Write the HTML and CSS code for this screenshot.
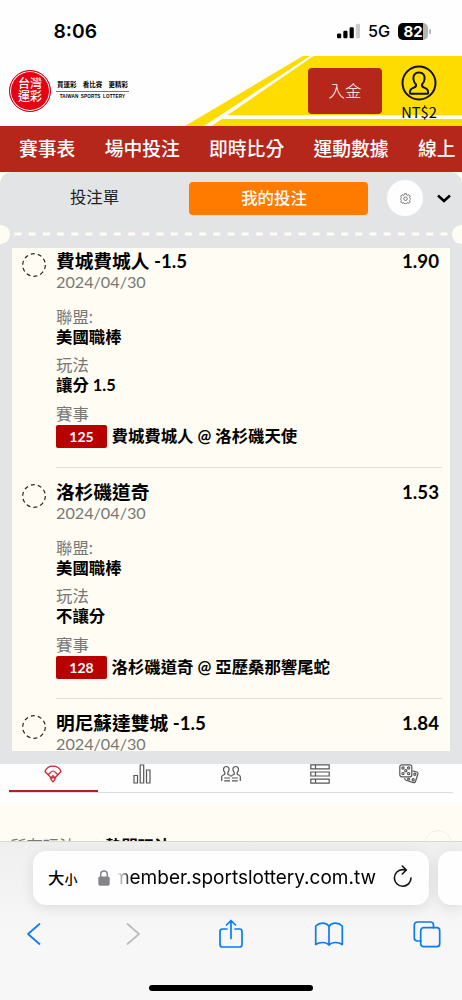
FILE: index.html
```html
<!DOCTYPE html>
<html lang="zh-Hant">
<head>
  <meta charset="UTF-8" />
  <meta name="viewport" content="width=device-width, initial-scale=1.0" />
  <title>台灣運彩</title>
  <link rel="stylesheet" href="styles.css">
</head>
<body>

  <!-- Phone status bar -->
  <div class="status-bar">
    <span class="clock">8:06</span>
    <div class="status-icons">
      <svg width="23" height="16" viewBox="0 0 23 16">
        <rect x="0" y="10.5" width="4.2" height="4.8" rx="1.2"/>
        <rect x="6.3" y="7.7" width="4.2" height="7.6" rx="1.2"/>
        <rect x="12.6" y="4.2" width="4.2" height="11.1" rx="1.2"/>
        <rect x="18.8" y="0.8" width="4.2" height="14.5" rx="1.2" fill="#ccc"/>
      </svg>
      <span class="network">5G</span>
      <div class="battery">82</div>
    </div>
  </div>

  <header class="header">
    <svg class="header-bg" width="462" height="70" viewBox="0 0 462 70">
      <path d="M303 0H462V70H185Z" fill="#ffdc00"/>
      <path d="M310 0H313.500L211.500 70H204ZM224 59.300H462V63H218Z" fill="#fff"/>
    </svg>
    <div class="logo">
      <div class="logo-mark"><span>台灣</span><span>運彩</span></div>
      <div class="logo-text">
        <div class="slogan"><span>買運彩</span><span>看比賽</span><span>更精彩</span></div>
        <div class="logo-en">TAIWAN SPORTS LOTTERY</div>
      </div>
    </div>
    <button class="deposit-btn">入金</button>
    <div class="account">
      <svg width="36" height="36" viewBox="0 0 36 36" fill="none" stroke="#111" stroke-width="2">
        <circle cx="18" cy="18" r="16.500"/>
        <path d="M18 7.500c-4 0-6 2.700-5.600 6.500.3 2.500 1.300 4.300 2.600 5.400.4 1.900-.3 2.600-2.200 3.200-2.700.8-4.100 2.400-3.900 5.200.1.700.5 1 1.200 1h15.800c.7 0 1.100-.3 1.200-1 .2-2.800-1.200-4.400-3.900-5.200-1.900-.6-2.600-1.300-2.200-3.200 1.300-1.100 2.300-2.900 2.600-5.400.4-3.800-1.600-6.500-5.600-6.500z"/>
      </svg>
      <span>NT$2</span>
    </div>
  </header>

  <nav class="main-nav">
    <a>賽事表</a>
    <a>場中投注</a>
    <a>即時比分</a>
    <a>運動數據</a>
    <a>線上</a>
  </nav>

  <!-- Bet slip -->
  <div class="slip-wrap">
    <section class="slip">
      <div class="slip-tabs">
        <span class="slip-tab">投注單</span>
        <span class="slip-tab active">我的投注</span>
        <span class="settings">
          <svg width="11" height="11" viewBox="0 0 22 22" fill="none" stroke="#555" stroke-width="1.600">
            <path d="M9 1.500h4l.6 2.600 1.900.8 2.300-1.500 2.800 2.800-1.500 2.300.8 1.900.6.600v2l-.6.600-.8 1.900 1.500 2.300-2.800 2.800-2.300-1.500-1.900.8-.6 1.600H9l-.6-1.600-1.900-.8-2.300 1.500-2.800-2.800 1.500-2.300-.8-1.900-.6-.600v-2l.6-.600.8-1.900-1.500-2.300 2.800-2.800 2.300 1.500 1.900-.8z"/>
            <circle cx="11" cy="11.500" r="3.500"/>
          </svg>
        </span>
        <svg class="chevron" width="14" height="9" viewBox="0 0 14 9"><path d="M1 1.500L7 7L13 1.500" fill="none" stroke="#000" stroke-width="2.400"/></svg>
      </div>
      <div class="perforation">
        <span class="notch"></span>
        <svg width="434" height="4" viewBox="0 0 434 4"><path d="M0.500 2H434" stroke="#fffdf3" stroke-width="3" stroke-dasharray="7 7.200"/></svg>
        <span class="notch"></span>
      </div>

      <div class="bet-list">
        <article class="bet">
          <svg class="bet-status" width="26" height="26" viewBox="0 0 26 26"><circle cx="13" cy="13" r="11.300"/></svg>
          <div class="bet-body">
            <div class="bet-title"><h2>費城費城人 -1.5</h2><span>1.90</span></div>
            <div class="date">2024/04/30</div>
            <dl>
              <dt>聯盟:</dt><dd>美國職棒</dd>
              <dt>玩法</dt><dd>讓分 1.5</dd>
              <dt>賽事</dt><dd class="match"><span class="badge">125</span>費城費城人 @ 洛杉磯天使</dd>
            </dl>
          </div>
        </article>

        <article class="bet">
          <svg class="bet-status" width="26" height="26" viewBox="0 0 26 26"><circle cx="13" cy="13" r="11.300"/></svg>
          <div class="bet-body">
            <div class="bet-title"><h2>洛杉磯道奇</h2><span>1.53</span></div>
            <div class="date">2024/04/30</div>
            <dl>
              <dt>聯盟:</dt><dd>美國職棒</dd>
              <dt>玩法</dt><dd>不讓分</dd>
              <dt>賽事</dt><dd class="match"><span class="badge">128</span>洛杉磯道奇 @ 亞歷桑那響尾蛇</dd>
            </dl>
          </div>
        </article>

        <article class="bet">
          <svg class="bet-status" width="26" height="26" viewBox="0 0 26 26"><circle cx="13" cy="13" r="11.300"/></svg>
          <div class="bet-body">
            <div class="bet-title"><h2>明尼蘇達雙城 -1.5</h2><span>1.84</span></div>
            <div class="date">2024/04/30</div>
          </div>
        </article>
      </div>
    </section>
  </div>

  <!-- Event page tabs -->
  <div class="icon-tabs">
    <div class="icon-tab active">
      <svg width="18" height="18" viewBox="0 0 18 18">
        <path d="M1 6.500C3.500 -0.600 14.500 -0.600 17 6.500L11 12.800V14.500L9 16.800L7 14.500V12.800Z"/>
        <path d="M4.500 10Q4.700 8 6.500 7.800Q7 6 9 6T11.500 7.800Q13.300 8 13.500 10M6.800 12.800L9 10.500L11.200 12.800Z"/>
      </svg>
    </div>
    <div class="icon-tab">
      <svg width="18" height="20" viewBox="0 0 18 20"><path d="M1 11.500h3.500v7.500H1zM7.200 1h3.500v18H7.200zM13.500 6H17V19h-3.500z"/></svg>
    </div>
    <div class="icon-tab">
      <svg width="20" height="18" viewBox="0 0 20 18">
        <path d="M.7 17V12.800Q.7 11.500 2.300 11L3.800 10.300V8.500Q2.300 6.800 2.500 4.800Q3 2.500 5.300 2.500T8.100 4.800Q8.300 6.800 6.800 8.500V10.300L8.300 11Q9.500 11.400 9.500 12.500M10.500 12.500Q10.500 11.400 11.700 11L13.200 10.300V8.500Q11.700 6.800 11.900 4.800Q12.400 2.500 14.700 2.500T17.500 4.800Q17.700 6.800 16.200 8.500V10.300L17.700 11Q19.300 11.500 19.300 12.800V17M3.200 14H9M3.200 16.800H9M11 14H16.800M11 16.800H16.800"/>
      </svg>
    </div>
    <div class="icon-tab">
      <svg width="20" height="20" viewBox="0 0 20 20"><path d="M.8 .8h18.400v4H.8zM.8 8h18.400v4H.8zM.8 15.200h18.400v4H.8zM5.500 .8v4M5.500 8v4M5.500 15.200v4"/></svg>
    </div>
    <div class="icon-tab">
      <svg width="20" height="20" viewBox="0 0 20 20">
        <rect x=".8" y=".8" width="12" height="12" rx="2"/>
        <path d="M13.500 6.800L17.800 8Q19.300 8.500 18.900 10L16.500 17.500Q16 19 14.500 18.600L7 16.200Q5.500 15.500 5.800 14"/>
        <circle cx="4" cy="4" r="1.100"/><circle cx="9.600" cy="4" r="1.100"/><circle cx="6.800" cy="6.800" r="1.100"/>
        <circle cx="4" cy="9.600" r="1.100"/><circle cx="9.600" cy="9.600" r="1.100"/>
        <circle cx="15.800" cy="10.300" r="1.100"/><circle cx="14.200" cy="15.800" r="1.100"/><circle cx="9.600" cy="15" r="1"/>
      </svg>
    </div>
  </div>
  <div class="page-below">
    <span>所有玩法</span>
    <strong>熱門玩法</strong>
    <i></i>
  </div>

  <!-- Browser bar -->
  <footer class="browser">
    <div class="address-row">
      <div class="address">
        <span class="text-size">大<small>小</small></span>
        <svg class="lock" width="12" height="16" viewBox="0 0 12 16"><rect x=".3" y="6.500" width="11.400" height="9.200" rx="1.800" fill="#858589"/><path d="M2.700 7V4.300Q2.700 1 6 1T9.300 4.300V7" fill="none" stroke="#858589" stroke-width="1.500"/></svg>
        <div class="url"><span>member.sportslottery.com.tw</span></div>
        <svg class="reload" width="20" height="23" viewBox="0 0 20 23" fill="none" stroke="#111" stroke-width="1.600" stroke-linecap="round" stroke-linejoin="round"><path d="M12.500 5Q11 4.600 9.700 4.600A8.300 8.300 0 1 0 18 13M9.300 1L13.300 5L9.300 9"/></svg>
      </div>
      <div class="next-page"></div>
    </div>
    <div class="toolbar">
      <svg width="30" height="30" viewBox="0 0 30 30"><path d="M20.500 5L9 15L20.500 25"/></svg>
      <svg class="disabled" width="30" height="30" viewBox="0 0 30 30"><path d="M10.500 5L22 15L10.500 25"/></svg>
      <svg width="30" height="30" viewBox="0 0 30 30"><path d="M11 10H6.500Q4 10 4 12.500V25.500Q4 28 6.500 28H23.500Q26 28 26 25.500V12.500Q26 10 23.500 10H19M15 19.500V1.500M10.500 6L15 1.500L19.500 6"/></svg>
      <svg width="30" height="30" viewBox="0 0 30 30"><path d="M15 7.500Q13 4.200 8.500 4.200Q4.500 4.200 1.700 7V25.500Q4.500 23.500 8.500 23.500Q13 23.500 15 26Q17 23.500 21.500 23.500Q25.500 23.500 28.300 25.500V7Q25.500 4.200 21.500 4.200Q17 4.200 15 7.500ZM15 7.500V26"/></svg>
      <svg width="30" height="30" viewBox="0 0 30 30"><rect x="8.700" y="8.700" width="19" height="19" rx="3"/><path d="M8.700 22H5.500Q2.300 22 2.300 19V6Q2.300 3 5.500 3H18.500Q21.500 3 21.500 6V8.700"/></svg>
    </div>
    <div class="home-indicator"></div>
  </footer>

</body>
</html>
```
FILE: styles.css
```css
* {
  box-sizing: border-box;
}

body {
  margin: 0;
  width: 462px;
  height: 1000px;
  overflow: hidden;
  background: #fefefe;
  color: #000;
  font-family: Lato, "Noto Sans CJK TC", sans-serif;
}

svg {
  display: block;
  flex-shrink: 0;
}

.status-bar {
  height: 55px;
  padding: 7px 34px 0 53.5px;
  display: flex;
  align-items: center;
  justify-content: space-between;
  font-family: Inter, sans-serif;
}

.clock {
  font-size: 19.3px;
  font-weight: 600;
}

.status-icons {
  display: flex;
  align-items: center;
}

.network {
  margin: 0 8px;
  font-size: 16.2px;
  font-weight: 500;
}

.battery {
  position: relative;
  width: 30px;
  height: 17px;
  border-radius: 5px;
  background: linear-gradient(to right, #000 82%, #b5b5b5 82%);
  color: #fff;
  font-size: 15px;
  font-weight: 700;
  line-height: 17px;
  text-align: center;
}

.battery::after {
  content: "";
  position: absolute;
  right: -2.5px;
  top: 6px;
  width: 1.5px;
  height: 5px;
  border-radius: 1px;
  background: #b5b5b5;
}

.header {
  position: relative;
  height: 70.5px;
  display: flex;
  padding-left: 9px;
}

.header-bg {
  position: absolute;
  top: 0.5px;
  left: 0;
  z-index: -1;
}

.logo {
  display: flex;
  width: 299px;
  padding-top: 14.5px;
}

.logo-mark {
  display: flex;
  flex-direction: column;
  align-items: center;
  justify-content: center;
  width: 42px;
  height: 42px;
  border: 1px solid #d8000f;
  border-radius: 50%;
  background: #e60012;
  box-shadow: inset 0 0 0 1px #fff;
  color: #fff;
  font-size: 12px;
  font-weight: 500;
  line-height: 12.5px;
}

.logo-text {
  width: 73px;
  margin: 10px 0 0 5px;
}

.slogan {
  display: flex;
  justify-content: space-between;
  padding: 0 1px 2px;
  border-bottom: 1px solid #777;
  font-size: 6.5px;
  font-weight: 700;
  line-height: 9px;
}

.logo-en {
  margin-top: 1px;
  font: bold 4.6px/8px "Liberation Sans", sans-serif;
  text-align: center;
  word-spacing: 1px;
  white-space: nowrap;
  letter-spacing: 0.15px;
}

.deposit-btn {
  width: 74px;
  height: 46px;
  margin-top: 12.5px;
  padding: 0;
  border: none;
  border-radius: 4px;
  background: #b5261b;
  color: #fff;
  font: 300 16.4px/46px Lato, "Noto Sans CJK TC", sans-serif;
}

.account {
  display: flex;
  flex-direction: column;
  align-items: center;
  width: 74px;
  padding-top: 9.5px;
  font-family: "Noto Sans CJK TC", sans-serif;
  font-size: 14.6px;
  line-height: 21px;
}

.main-nav {
  display: flex;
  gap: 29.3px;
  height: 46px;
  padding-left: 19px;
  overflow: hidden;
  background: #b5261b;
  color: #fff;
  font-size: 18.8px;
  font-weight: 500;
  line-height: 45px;
  white-space: nowrap;
}

.slip-wrap {
  background: #fffdf3;
}

.slip {
  height: 592.5px;
  border-radius: 12px 12px 0 0;
  background: #e3e4e6;
}

.slip-tabs {
  display: flex;
  align-items: center;
  height: 53px;
  font-size: 16.4px;
}

.slip-tab {
  width: 189px;
  color: #222;
  line-height: 33px;
  padding-bottom: 3px;
  text-align: center;
}

.slip-tab.active {
  width: 179px;
  height: 33px;
  padding: 0 9px 0 0;
  border-radius: 4px;
  background: #ff7b00;
  color: #fff;
  font-weight: 500;
  line-height: 32px;
}

.settings {
  display: flex;
  align-items: center;
  justify-content: center;
  width: 36px;
  height: 36px;
  margin-left: 19px;
  border-radius: 50%;
  background: #fefefe;
}

.chevron {
  margin-left: 14px;
}

.perforation {
  display: flex;
  align-items: center;
  justify-content: space-between;
  height: 19px;
  margin: 0 -9px 4px;
}

.notch {
  width: 19px;
  height: 19px;
  border-radius: 50%;
  background: #fffdf3;
}

.bet-list {
  height: 503px;
  margin: 0 12px;
  overflow: hidden;
  background: #fffdf3;
}

.bet {
  display: flex;
  height: 231px;
  padding-left: 9px;
}

.bet-status {
  margin-top: 4px;
}

.bet-status circle {
  fill: none;
  stroke: #222;
  stroke-width: 1.2;
  stroke-dasharray: 4 3.1;
}

.bet-body {
  width: 386px;
  height: 220px;
  margin-left: 9px;
  border-bottom: 1px solid #dedddb;
}

.bet-title {
  display: flex;
  justify-content: space-between;
  height: 26px;
  padding-right: 3px;
  font-size: 18.7px;
  font-weight: 700;
  line-height: 27px;
}

h2 {
  margin: 0;
  font: inherit;
}

.date {
  color: #777;
  font-size: 16.2px;
  line-height: 15px;
}

dl {
  margin: 18px 0 0;
  font-size: 16.4px;
  line-height: 20px;
}

dt {
  color: #777;
}

dd {
  margin: 0 0 8.5px;
  font-weight: 700;
}

.match {
  display: flex;
  align-items: center;
  gap: 4.5px;
  height: 23px;
  margin-top: 1px;
}

.badge {
  width: 51px;
  height: 23px;
  border-radius: 2px;
  background: #b80000;
  color: #fff;
  font-size: 14px;
  line-height: 23px;
  text-align: center;
}

.icon-tabs {
  display: flex;
  height: 29px;
  margin: 0 9px;
  border-bottom: 1px solid #ddd;
}

.icon-tab {
  display: flex;
  justify-content: center;
  flex: 1;
  height: 28px;
}

.icon-tab svg {
  fill: none;
  stroke: #555;
  stroke-width: 1.2;
}

.icon-tab.active {
  border-bottom: 2px solid #b91c1c;
}

.icon-tab.active svg {
  margin-top: 1px;
  stroke: #c8232a;
}

.page-below {
  display: flex;
  height: 38px;
  margin-top: 10px;
  padding: 35px 10px 0;
  overflow: hidden;
  background: #fffdf3;
  font-size: 16.4px;
  line-height: 16px;
}

.page-below span {
  width: 95px;
  color: #777;
}

.page-below i {
  width: 28px;
  height: 28px;
  margin: -8px 0 0 auto;
  border: 1px solid #f0eeea;
  border-radius: 50%;
}

.browser {
  height: 159px;
  border-top: 1px solid #d9d8d5;
  background: linear-gradient(#efefef, #f7f7f7 90px);
}

.address-row {
  display: flex;
  gap: 9px;
  padding: 9px 0 0 33px;
}

.address {
  display: flex;
  flex-shrink: 0;
  align-items: center;
  width: 396px;
  height: 54px;
  padding: 0 16px 0 15px;
  border-radius: 13px;
  background: #fefefe;
  box-shadow: 0 3px 14px rgba(0, 0, 0, 0.1);
}

.next-page {
  flex: 1;
  height: 54px;
  border-radius: 13px 0 0 13px;
  background: #fefefe;
  box-shadow: 0 3px 14px rgba(0, 0, 0, 0.1);
}

.text-size {
  width: 50px;
  margin-top: -2px;
  font-size: 16.4px;
  font-weight: 500;
}

.text-size small {
  font-size: 13px;
}

.url {
  display: flex;
  justify-content: flex-end;
  width: 259px;
  margin-left: 7px;
  overflow: hidden;
  font: 19px/26px Inter, sans-serif;
  -webkit-mask-image: linear-gradient(to right, transparent, #000 14px);
  mask-image: linear-gradient(to right, transparent, #000 14px);
}

.reload {
  margin: -3px 0 0 auto;
}

.toolbar {
  display: flex;
  justify-content: space-between;
  padding: 14px 20px 0 19px;
}

.toolbar svg {
  fill: none;
  stroke: #087cf4;
  stroke-width: 1.7;
  stroke-linecap: round;
  stroke-linejoin: round;
}

.toolbar .disabled {
  stroke: #bcbcbe;
}

.home-indicator {
  width: 164px;
  height: 6px;
  margin: 35.5px auto 0;
  border-radius: 3px;
  background: #000;
}
```
